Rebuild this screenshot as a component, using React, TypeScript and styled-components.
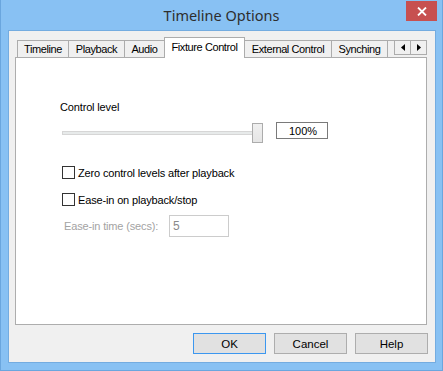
import React from "react";
import styled, { createGlobalStyle } from "styled-components";

const GlobalStyle = createGlobalStyle`
  html, body { margin: 0; padding: 0; background: #87c0f2; }
  body { font-family: "Liberation Sans", Arial, sans-serif; font-size: 11px; }
  * { box-sizing: border-box; }
`;

const Window = styled.div`
  width: 443px;
  height: 371px;
  background: #88c1f3;
  border-left: 1px solid #6aa6de;
  border-right: 1px solid #6aa6de;
  border-bottom: 1px solid #6aa6de;
  display: flex;
  flex-direction: column;
`;

const TitleBar = styled.div`
  height: 30px;
  display: grid;
  grid-template-columns: 1fr auto 1fr;
  align-items: start;
  flex-shrink: 0;
`;

const Title = styled.div`
  grid-column: 2;
  font-family: "Noto Sans", "Open Sans", sans-serif;
  font-size: 14.5px;
  color: #2e2e2e;
  line-height: 30px;
`;

const CloseButton = styled.div`
  grid-column: 3;
  justify-self: end;
  margin-top: 1px;
  margin-right: 5px;
  width: 31px;
  height: 20px;
  background: #c75050;
  display: flex;
  align-items: center;
  justify-content: center;
`;

const Client = styled.div`
  margin: 0 6px 7px 7px;
  flex: 1;
  background: #f0f0f0;
  border: 1px solid #74ace0;
  display: flex;
  flex-direction: column;
  padding: 6px 8px 8px 6px;
`;

const TabBar = styled.div`
  display: flex;
  align-items: flex-end;
  height: 21px;
  margin-bottom: -1px;
  padding-left: 2px;
  position: relative;
  z-index: 1;
`;

const TabViewport = styled.div`
  width: 379px;
  overflow: hidden;
  display: flex;
  align-items: flex-end;
  height: 21px;
`;

const Tab = styled.div<{ $w: number; $active?: boolean }>`
  flex: 0 0 ${(p) => p.$w}px;
  height: ${(p) => (p.$active ? 21 : 18)}px;
  margin-left: -1px;
  border: 1px solid #acacac;
  border-bottom: ${(p) => (p.$active ? "none" : "1px solid #acacac")};
  background: ${(p) => (p.$active ? "#ffffff" : "#f0f0f0")};
  color: #000;
  font-size: 11px;
  letter-spacing: -0.4px;
  display: flex;
  justify-content: center;
  align-items: ${(p) => (p.$active ? "flex-start" : "center")};
  padding-top: ${(p) => (p.$active ? 3 : 0)}px;
  white-space: nowrap;
  position: relative;
  z-index: ${(p) => (p.$active ? 2 : 1)};
  &:first-child { margin-left: 0; }
`;

const ScrollButtons = styled.div`
  display: flex;
  margin-left: 1px;
  align-self: flex-start;
  margin-top: 3px;
`;

const ScrollButton = styled.div`
  width: 17px;
  height: 15px;
  border: 1px solid #acacac;
  background: #f0f0f0;
  margin-left: -1px;
  display: flex;
  align-items: center;
  justify-content: center;
`;

const Panel = styled.div`
  height: 268px;
  background: #ffffff;
  border: 1px solid #adadad;
  padding: 43px 0 0 46px;
  display: flex;
  flex-direction: column;
`;

const FieldLabel = styled.div`
  font-size: 11px;
  line-height: 13px;
  letter-spacing: -0.15px;
  margin-left: -2px;
  color: #000;
`;

const SliderRow = styled.div`
  display: flex;
  align-items: flex-start;
  margin-top: 8px;
  height: 21px;
`;

const Slider = styled.div`
  position: relative;
  width: 200px;
  height: 21px;
`;

const Track = styled.div`
  position: absolute;
  left: 0;
  right: 0;
  top: 9px;
  height: 4px;
  background: #e7eaea;
  border: 1px solid #d6d6d6;
`;

const Thumb = styled.div`
  position: absolute;
  top: 1px;
  width: 11px;
  height: 20px;
  border: 1px solid #acacac;
  background: linear-gradient(#f0f0f0, #e5e5e5);
`;

const ValueBox = styled.div`
  margin-left: 14px;
  width: 52px;
  height: 17px;
  border: 1px solid #7a7a7a;
  background: #fff;
  display: flex;
  align-items: center;
  justify-content: center;
  font-size: 11px;
  padding-left: 2px;
`;

const CheckRow = styled.label<{ $gap: number }>`
  display: flex;
  align-items: center;
  gap: 3px;
  margin-top: ${(p) => p.$gap}px;
  height: 15px;
  font-size: 11px;
  letter-spacing: -0.15px;
  color: #000;
`;

const CheckBox = styled.span`
  width: 13px;
  height: 13px;
  border: 1px solid #333333;
  background: #fff;
  flex-shrink: 0;
`;

const EaseRow = styled.div`
  display: flex;
  align-items: center;
  margin-top: 8px;
  height: 22px;
`;

const DisabledLabel = styled.div`
  font-size: 11px;
  letter-spacing: -0.15px;
  color: #a3a3a3;
  margin-left: 2px;
  width: 105px;
`;

const DisabledInput = styled.div`
  width: 60px;
  height: 22px;
  border: 1px solid #cccccc;
  background: #fff;
  color: #8a8a8a;
  font-size: 12px;
  display: flex;
  align-items: center;
  padding-left: 3px;
`;

const ButtonRow = styled.div`
  display: flex;
  justify-content: flex-end;
  gap: 8px;
  margin-top: 8px;
  margin-right: -1px;
`;

const Button = styled.div<{ $default?: boolean }>`
  width: 73px;
  height: 21px;
  background: #e1e1e1;
  border: 1px solid ${(p) => (p.$default ? "#3c97ef" : "#adadad")};
  display: flex;
  align-items: center;
  justify-content: center;
  font-size: 11.5px;
  color: #000;
`;

const tabs = [
  { label: "Timeline", w: 52 },
  { label: "Playback", w: 57 },
  { label: "Audio", w: 41 },
  { label: "Fixture Control", w: 81, active: true },
  { label: "External Control", w: 88 },
  { label: "Synching", w: 57 },
  { label: "Sound", w: 50 },
];

export default function App() {
  const level = 100;
  const thumbLeft = ((200 - 10) * level) / 100;
  return (
    <>
      <GlobalStyle />
      <Window>
        <TitleBar>
          <Title>Timeline Options</Title>
          <CloseButton>
            <svg width="10" height="9" viewBox="0 0 10 9">
              <path d="M1 0.5 L9 8.5 M9 0.5 L1 8.5" stroke="#fff" strokeWidth="1.8" />
            </svg>
          </CloseButton>
        </TitleBar>
        <Client>
          <TabBar>
            <TabViewport>
              {tabs.map((t) => (
                <Tab key={t.label} $w={t.w} $active={t.active}>
                  {t.label}
                </Tab>
              ))}
            </TabViewport>
            <ScrollButtons>
              <ScrollButton>
                <svg width="4" height="7" viewBox="0 0 4 7">
                  <path d="M4 0 L0 3.5 L4 7 Z" fill="#000" />
                </svg>
              </ScrollButton>
              <ScrollButton>
                <svg width="4" height="7" viewBox="0 0 4 7">
                  <path d="M0 0 L4 3.5 L0 7 Z" fill="#000" />
                </svg>
              </ScrollButton>
            </ScrollButtons>
          </TabBar>
          <Panel>
            <FieldLabel>Control level</FieldLabel>
            <SliderRow>
              <Slider>
                <Track />
                <Thumb style={{ left: thumbLeft }} />
              </Slider>
              <ValueBox>100%</ValueBox>
            </SliderRow>
            <CheckRow $gap={22}>
              <CheckBox />
              Zero control levels after playback
            </CheckRow>
            <CheckRow $gap={12}>
              <CheckBox />
              Ease-in on playback/stop
            </CheckRow>
            <EaseRow>
              <DisabledLabel>Ease-in time (secs):</DisabledLabel>
              <DisabledInput>5</DisabledInput>
            </EaseRow>
          </Panel>
          <ButtonRow>
            <Button $default>OK</Button>
            <Button>Cancel</Button>
            <Button>Help</Button>
          </ButtonRow>
        </Client>
      </Window>
    </>
  );
}
